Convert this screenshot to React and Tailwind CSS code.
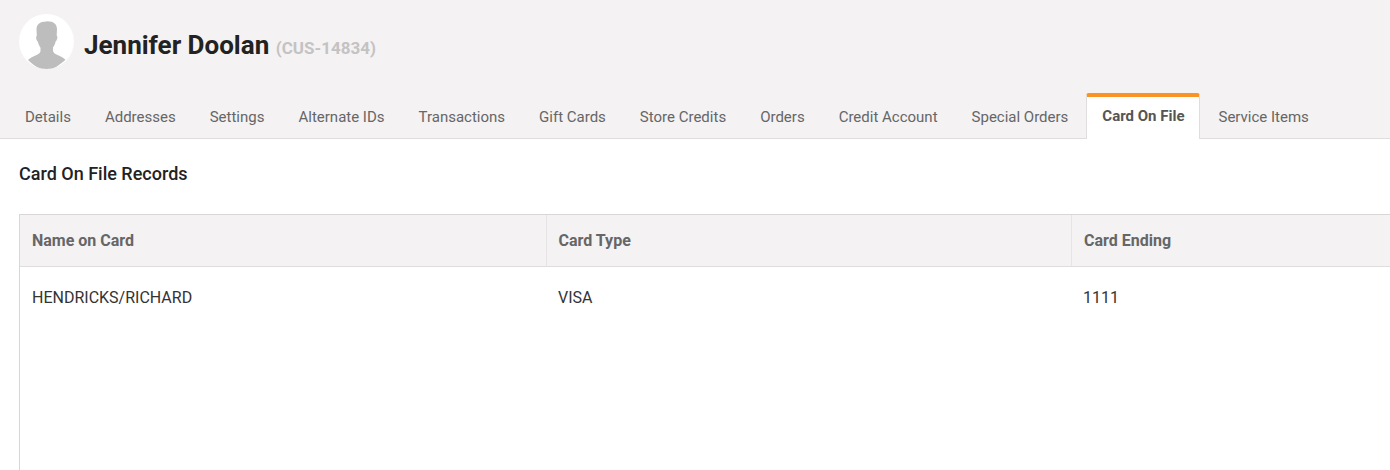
import React from "react";

const tabs = [
  "Details",
  "Addresses",
  "Settings",
  "Alternate IDs",
  "Transactions",
  "Gift Cards",
  "Store Credits",
  "Orders",
  "Credit Account",
  "Special Orders",
  "Card On File",
  "Service Items",
];

const Avatar = () => (
  <div className="w-[55px] h-[55px] rounded-full bg-white overflow-hidden shrink-0">
    <svg viewBox="0 0 55 55" className="w-full h-full" fill="#bdbdbd">
      <path d="M27.5 7.500c-7 0-10 3.200-10 8 0 2.500.4 4.500.2 6.500-.3.500-.7.800-.6 1.800.2 1.800.8 3.200 1.700 3.700.6 2.800 1.700 4.800 2.700 6.200v3.300c0 1.500-1.500 3-4.500 4.300-3 1.300-5.600 2.300-8 4.700C13.500 50 20 56 27.500 56S41.500 50 46.500 45.800c-2.400-2.400-5-3.400-8-4.700-3-1.300-4.500-2.800-4.500-4.300v-3.300c1-1.400 2.100-3.400 2.700-6.200.9-.5 1.500-1.900 1.700-3.700.1-1-.3-1.300-.6-1.800-.2-2 .2-4 .2-6.500 0-4.800-3-8-10-8z" />
    </svg>
  </div>
);

const App = () => {
  return (
    <div className="w-[1390px] h-[470px] overflow-hidden bg-white font-['Roboto',sans-serif]">
      {/* Header */}
      <div className="h-[139px] bg-[#f4f2f3] border-b border-[#dfdddd] flex flex-col">
        <div className="flex items-center pl-[19px] pt-[14px] gap-[10px]">
          <Avatar />
          <h1 className="pt-[10px] text-[26px] leading-[30px] font-bold text-[#222] whitespace-nowrap">
            Jennifer Doolan{" "}
            <span className="text-[17px] font-bold text-[#c4c2c3]">(CUS-14834)</span>
          </h1>
        </div>

        {/* Tabs */}
        <div className="flex pl-[8px] mt-[24px] h-[46px]">
          {tabs.map((t) =>
            t === "Card On File" ? (
              <div
                key={t}
                className="h-[46px] px-[15px] pb-[3px] ml-[1px] mr-[1px] flex items-center bg-white border-x border-[#dfdddd] border-t-4 border-t-[#fb9223] rounded-t-[3px] text-[15px] font-bold text-[#555] whitespace-nowrap"
              >
                {t}
              </div>
            ) : (
              <div
                key={t}
                className="h-[46px] pt-[2px] px-[17px] flex items-center text-[15px] text-[#666] whitespace-nowrap"
              >
                {t}
              </div>
            )
          )}
        </div>
      </div>

      {/* Content */}
      <div className="pl-[19px]">
        <h2 className="mt-[24px] text-[18px] leading-[21px] font-medium text-[#222]">
          Card On File Records
        </h2>

        <div className="mt-[30px] w-[1600px] h-[300px] border border-[#d8d6d6]">
          <div className="grid grid-cols-[527px_525px_1fr] h-[52px] bg-[#f4f2f3] border-b border-[#dfdddd] text-[16px] font-bold text-[#666]">
            <div className="px-[12px] flex items-center border-r border-[#e6e4e4]">Name on Card</div>
            <div className="px-[11.5px] flex items-center border-r border-[#e6e4e4]">Card Type</div>
            <div className="px-[12px] flex items-center">Card Ending</div>
          </div>
          <div className="grid grid-cols-[527px_525px_1fr] h-[62px] text-[16px] text-[#333]">
            <div className="px-[12px] flex items-center">HENDRICKS/RICHARD</div>
            <div className="px-[11px] flex items-center">VISA</div>
            <div className="px-[11px] flex items-center">1111</div>
          </div>
        </div>
      </div>
    </div>
  );
};

export default App;
